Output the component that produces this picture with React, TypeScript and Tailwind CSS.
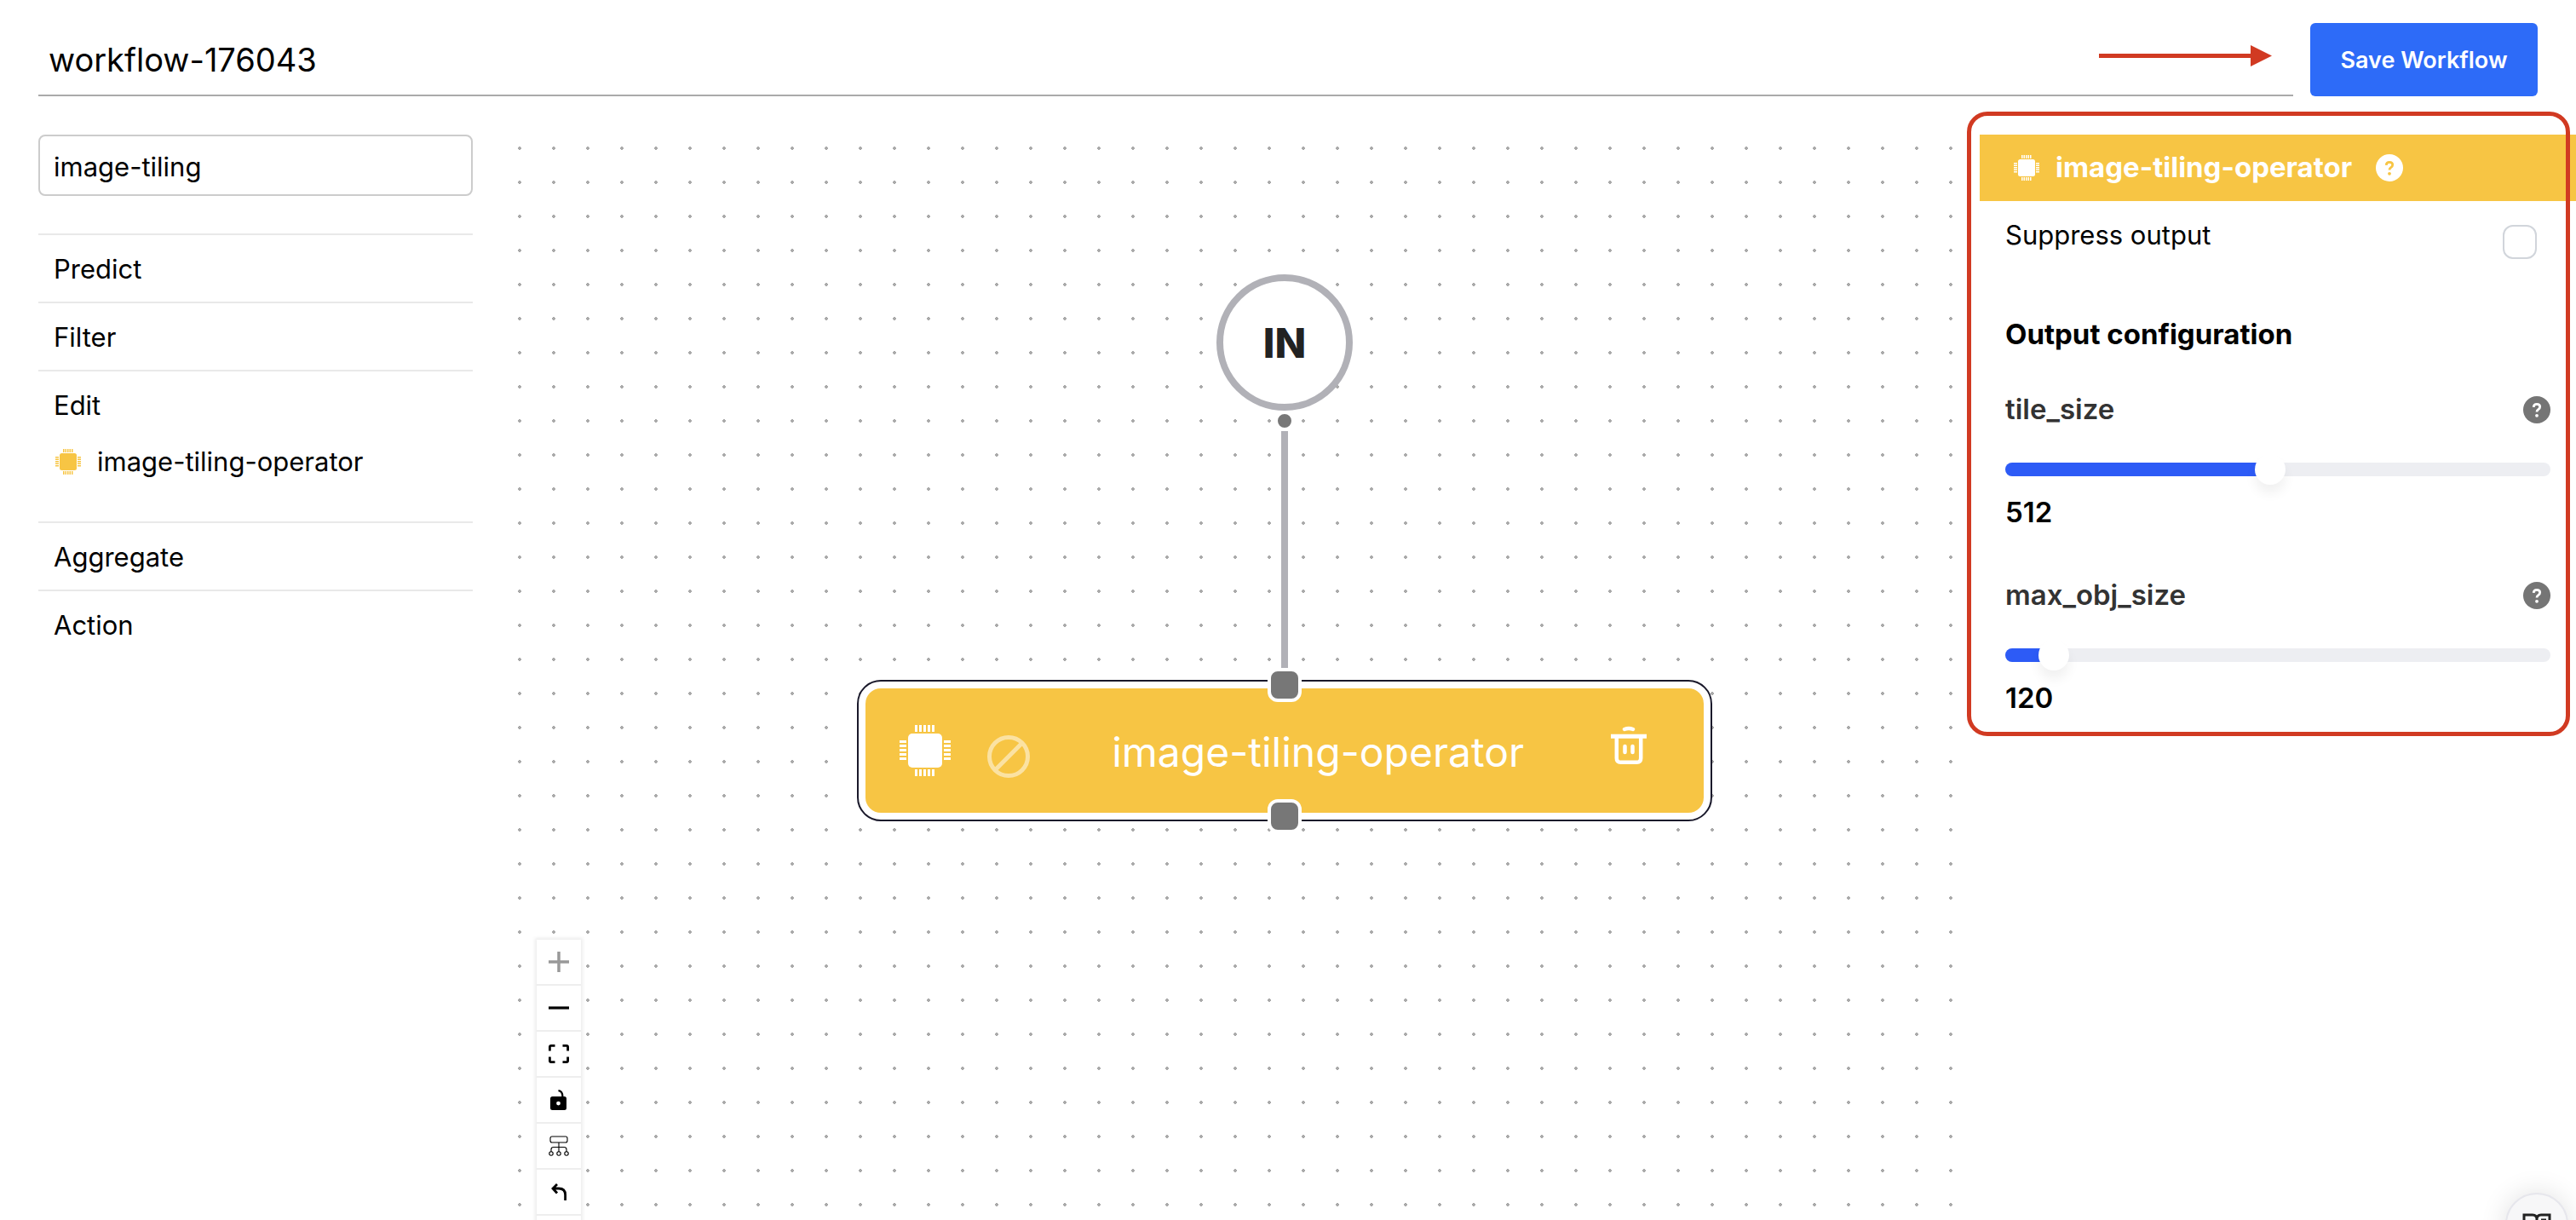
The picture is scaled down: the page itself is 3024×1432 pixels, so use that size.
import React, { useState } from "react";

function ChipIcon({ className }: { className: string }) {
  const pins = [18, 23, 28, 33, 38];
  return (
    <svg viewBox="0 0 60 60" className={className} fill="currentColor" aria-hidden="true">
      <rect x="10" y="10" width="40" height="40" rx="5" />
      {pins.map((p) => (
        <g key={p}>
          <rect x={p} y="0" width="3" height="8" />
          <rect x={p} y="52" width="3" height="8" />
          <rect x="0" y={p} width="8" height="3" />
          <rect x="52" y={p} width="8" height="3" />
        </g>
      ))}
    </svg>
  );
}

function BanIcon({ className }: { className: string }) {
  return (
    <svg viewBox="0 0 50 50" className={className} fill="none" stroke="currentColor" strokeWidth="5" aria-hidden="true">
      <path d="M25 2.5A22.5 22.5 0 1 0 25 47.5A22.5 22.5 0 1 0 25 2.5ZM40 10L10 40" />
    </svg>
  );
}

function TrashIcon({ className }: { className: string }) {
  return (
    <svg viewBox="0 0 42 46" className={className} fill="none" stroke="currentColor" strokeWidth="4.5" aria-hidden="true">
      <path d="M0 12.3H42" strokeWidth="5" />
      <path d="M6.8 14V38Q6.8 42.8 11.5 42.8H30.5Q35.2 42.8 35.2 38V14" />
      <path d="M16.5 24V31M25.5 24V31" strokeLinecap="round" />
      <path d="M16 4Q21 2 26 4" strokeLinecap="round" />
    </svg>
  );
}

function UnlockIcon() {
  return (
    <svg viewBox="0 0 20 24" className="h-6 w-5" aria-hidden="true">
      <path d="M9.5 1.2Q14.5 1.5 14.5 9" fill="none" stroke="black" strokeWidth="2.2" />
      <path fillRule="evenodd" d="M2.5 8H16.5Q19 8 19 10.5V21.5Q19 24 16.5 24H2.5Q0 24 0 21.5V10.5Q0 8 2.5 8ZM9.5 13.7A2.4 2.4 0 1 0 9.5 18.5A2.4 2.4 0 1 0 9.5 13.7Z" />
    </svg>
  );
}

function FitIcon() {
  return (
    <svg viewBox="0 0 24 22" className="h-[22px] w-6" fill="none" stroke="black" strokeWidth="2.8" aria-hidden="true">
      <path d="M1.4 7.5V3Q1.4 1.4 3 1.4H7.5M16.5 1.4H21Q22.6 1.4 22.6 3V7.5M22.6 14.5V19Q22.6 20.6 21 20.6H16.5M7.5 20.6H3Q1.4 20.6 1.4 19V14.5" />
    </svg>
  );
}

function LayoutIcon() {
  return (
    <svg viewBox="0 0 24 24" className="size-6" fill="none" stroke="black" strokeWidth="1.1" aria-hidden="true">
      <rect x="2" y="1" width="20" height="7" rx="2" />
      <path d="M12 8V19M3 19V16Q3 13.5 6 13.5H18Q21 13.5 21 16V19" />
      <circle cx="3" cy="21" r="2.2" />
      <circle cx="12" cy="21" r="2.2" />
      <circle cx="21" cy="21" r="2.2" />
    </svg>
  );
}

function UndoIcon() {
  return (
    <svg viewBox="0 0 18 20" className="h-5 w-[18px]" fill="none" stroke="black" strokeWidth="2.8" aria-hidden="true">
      <path d="M2 6H9Q16.6 6 16.6 13.5V20M7 1L2 6L7 11.5" />
    </svg>
  );
}

function HelpIcon({ className, mark }: { className: string; mark: string }) {
  return (
    <span className={`flex size-8 shrink-0 items-center justify-center rounded-full ${className}`}>
      <svg viewBox="0 0 32 32" className={`size-8 ${mark}`} fill="none" stroke="currentColor" aria-hidden="true">
        <path d="M12.2 12.8Q12.4 9.3 16 9.3Q19.7 9.3 19.7 12.5Q19.7 14.3 17.7 15.6Q16 16.7 16 18.6" strokeWidth="2.8" />
        <circle cx="16" cy="22.8" r="1.9" fill="currentColor" stroke="none" />
      </svg>
    </span>
  );
}

function SliderField({ name, initial, max }: { name: string; initial: number; max: number }) {
  const [value, setValue] = useState(initial);
  const ratio = value / max;
  return (
    <div className="mb-[46px]">
      <div className="flex h-10 items-center justify-between">
        <label htmlFor={name} className="text-[33px] font-semibold text-[#333333]">
          {name}
        </label>
        <button type="button" aria-label={`About ${name}`}>
          <HelpIcon className="bg-[#757575]" mark="text-white" />
        </button>
      </div>
      <div className="relative mt-8 h-9">
        <div className="absolute inset-x-0 top-[10px] h-4 overflow-hidden rounded-lg bg-[#edeef2]">
          <div className="h-full bg-[#2d5bf6]" style={{ width: `${ratio * 100}%` }} />
        </div>
        <input
          id={name}
          type="range"
          min={0}
          max={max}
          value={value}
          onChange={(e) => setValue(Number(e.target.value))}
          className="absolute inset-0 h-9 w-full appearance-none bg-transparent [&::-webkit-slider-thumb]:size-9 [&::-webkit-slider-thumb]:appearance-none [&::-webkit-slider-thumb]:rounded-full [&::-webkit-slider-thumb]:bg-white [&::-webkit-slider-thumb]:shadow-[0_10px_14px_rgba(0,0,0,0.06)]"
        />
      </div>
      <output htmlFor={name} className="mt-3 block h-[52px] text-[33px] leading-[40px] font-semibold text-black">
        {value}
      </output>
    </div>
  );
}

function Handle({ className }: { className: string }) {
  return <span className={`absolute left-1/2 size-10 -translate-x-1/2 rounded-xl border-4 border-white bg-[#777777] ${className}`} />;
}

const controls = [
  {
    label: "Zoom in",
    icon: <svg viewBox="0 0 24 24" className="size-6" stroke="#999999" strokeWidth="3.5" aria-hidden="true"><path d="M12 0V24M0 12H24" /></svg>,
  },
  {
    label: "Zoom out",
    icon: <svg viewBox="0 0 24 24" className="size-6" stroke="black" strokeWidth="3.2" aria-hidden="true"><path d="M0 12H24" /></svg>,
  },
  { label: "Fit view", icon: <FitIcon /> },
  { label: "Toggle lock", icon: <UnlockIcon /> },
  { label: "Auto layout", icon: <LayoutIcon /> },
  { label: "Undo", icon: <UndoIcon /> },
  { label: "Redo", icon: null },
];

const groups: { name: string; items: string[] }[] = [
  { name: "Predict", items: [] },
  { name: "Filter", items: [] },
  { name: "Edit", items: ["image-tiling-operator"] },
  { name: "Aggregate", items: [] },
  { name: "Action", items: [] },
];

export default function App() {
  const [title, setTitle] = useState("workflow-176043");
  const [query, setQuery] = useState("image-tiling");

  return (
    <div className="relative flex h-screen flex-col overflow-hidden bg-white font-['Inter','Liberation_Sans',sans-serif] text-black">
      <header className="flex items-end gap-5 pt-[27px] pr-[45px] pl-[45px]">
        <input
          aria-label="Workflow name"
          value={title}
          onChange={(e) => setTitle(e.target.value)}
          className="h-[86px] min-w-0 flex-1 border-b-2 border-[#aaaaaa] px-3 pt-0.5 text-[38px] outline-none"
        />
        <button type="button" className="h-[86px] w-[267px] rounded-md bg-[#2d6bf8] pt-0.5 text-[27px] font-semibold text-white">
          Save Workflow
        </button>
      </header>

      <div className="flex min-h-0 flex-1 pt-[45px]">
        <aside className="ml-[45px] w-[510px] shrink-0">
          <input
            aria-label="Search operators"
            value={query}
            onChange={(e) => setQuery(e.target.value)}
            className="mb-11 block h-[72px] w-full rounded-lg border-2 border-[#cccccc] px-4 pt-0.5 text-[31px] outline-none"
          />
          {groups.map((group) => (
            <section key={group.name} className="border-t-2 border-[#e9e9e9]">
              <button type="button" className="block h-[78px] w-full px-[18px] pt-0.5 text-left text-[31px]">
                {group.name}
              </button>
              {group.items.map((item) => (
                <button key={item} type="button" className="mb-[42px] flex h-14 w-full items-center gap-[19px] px-5 text-[31px]">
                  <ChipIcon className="size-[30px] text-[#f7c544]" />
                  {item}
                </button>
              ))}
            </section>
          ))}
        </aside>

        <main className="relative ml-[35px] flex-1 overflow-hidden bg-[radial-gradient(circle,#aaaaaa_2px,transparent_2px)] bg-[size:40px_40px] bg-[position:0_-4px]">
          <div className="absolute top-[164px] left-[838px] flex size-40 items-center justify-center rounded-full border-8 border-[#b1b1b7] bg-white pt-0.5 text-[48px] font-extrabold text-[#222222]">
            IN
          </div>
          <div className="absolute top-[324px] left-[904px] flex h-[302px] w-7 flex-col items-center gap-1">
            <span className="size-6 shrink-0 rounded-full border-4 border-white bg-[#777777]" />
            <span className="-mt-1 w-2 flex-1 bg-[#b1b1b7]" />
          </div>
          <div className="absolute top-[640px] left-[416px] h-[166px] w-[1004px] rounded-[28px] border-2 border-[#1a192b] bg-white p-2">
            <div className="flex h-full items-center rounded-[18px] bg-[#f7c544] pr-[67px] pl-10 text-white">
              <ChipIcon className="size-[60px]" />
              <BanIcon className="mt-3.5 ml-[43px] size-[50px] opacity-50" />
              <span className="flex-1 pt-1 pr-[102px] text-right text-[48px]">image-tiling-operator</span>
              <button type="button" aria-label="Delete node" className="mb-3">
                <TrashIcon className="h-[46px] w-[42px]" />
              </button>
            </div>
            <Handle className="-top-4" />
            <Handle className="-bottom-4" />
          </div>
          <div className="absolute top-[945px] left-10 w-[52px] bg-[#eeeeee] shadow-[0_0_4px_2px_rgba(0,0,0,0.08)]">
            {controls.map((c) => (
              <button key={c.label} type="button" aria-label={c.label} className="mb-0.5 flex h-[52px] w-full items-center justify-center bg-white">
                {c.icon}
              </button>
            ))}
          </div>
        </main>

        <aside className="ml-3 w-[700px] shrink-0">
          <h2 className="flex h-[78px] items-center bg-[#f7c544] pl-10 text-[33px] font-bold text-white">
            <ChipIcon className="mr-[19px] size-[30px]" />
            image-tiling-operator
            <button type="button" aria-label="About image-tiling-operator" className="ml-7">
              <HelpIcon className="bg-white" mark="text-[#f7c544]" />
            </button>
          </h2>
          <div className="pr-[30px] pl-[30px]">
            <div className="flex justify-between pt-5 pr-4">
              <label htmlFor="suppress" className="text-[31px] leading-[40px]">
                Suppress output
              </label>
              <input id="suppress" type="checkbox" className="mt-2 size-10 appearance-none rounded-xl border-2 border-[#d1d5db] bg-white" />
            </div>
            <h3 className="mt-[68px] mb-[49px] text-[33px] leading-[40px] font-bold">Output configuration</h3>
            <SliderField name="tile_size" initial={512} max={1056} />
            <SliderField name="max_obj_size" initial={120} max={1856} />
          </div>
        </aside>
      </div>

      <div className="pointer-events-none absolute top-[131px] right-[7px] h-[733px] w-[708px] rounded-[24px] border-[5px] border-[#d13a22]" />
      <svg viewBox="0 0 203 25" className="absolute top-[53px] right-[357px] h-[25px] w-[203px]" fill="#d13a22" aria-hidden="true">
        <path d="M0 10H178V0L203 12.5L178 25V15H0Z" />
      </svg>
      <button type="button" aria-label="Documentation" className="absolute right-[9px] -bottom-[42px] flex size-[74px] justify-center rounded-full border-2 border-[#e6e6ec] bg-[#f7f7f8] pt-[22px] shadow-[0_0_32px_rgba(0,0,0,0.12)]">
        <svg viewBox="0 0 34 30" className="h-[30px] w-[34px]" fill="none" stroke="#222222" strokeWidth="3" aria-hidden="true">
          <path d="M17 28V7Q17 2 12 2H2V25H12Q17 25 17 28Q17 25 22 25H32V2H22Q17 2 17 7M22 8H28M22 14H28" />
        </svg>
      </button>
    </div>
  );
}
